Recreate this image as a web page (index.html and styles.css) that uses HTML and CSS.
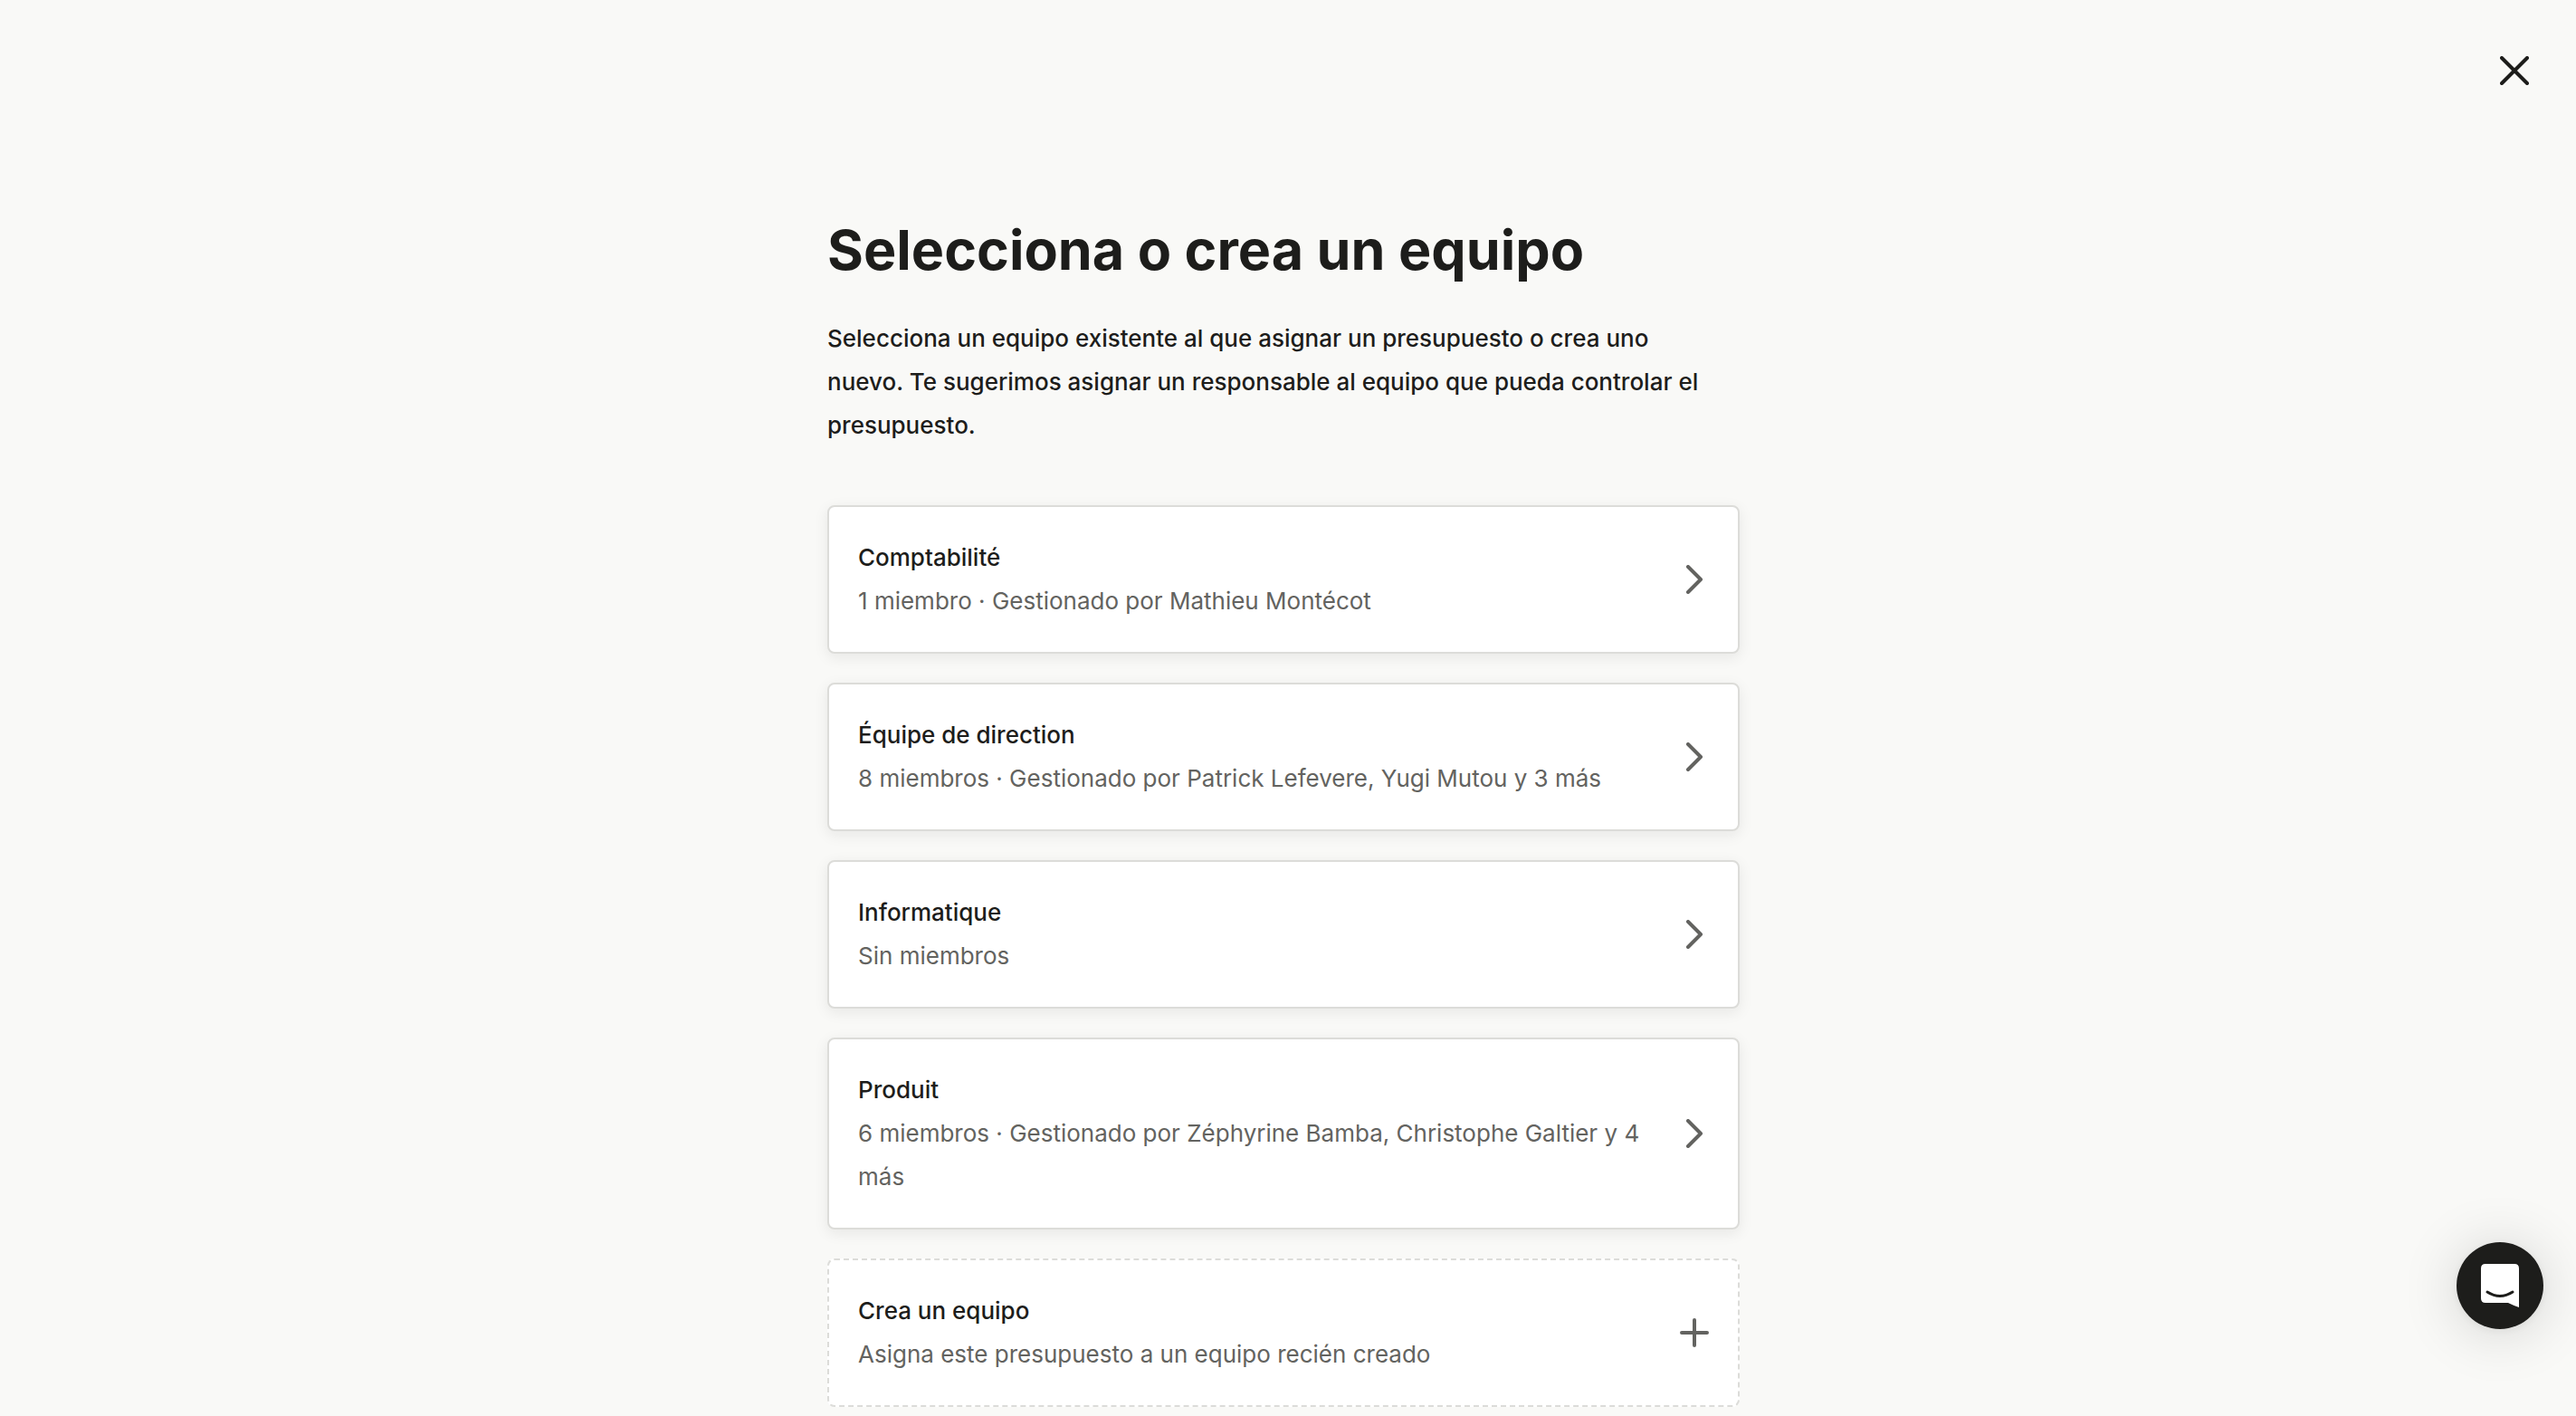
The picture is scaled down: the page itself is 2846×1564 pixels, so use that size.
FILE: index.html
```html
<!DOCTYPE html>
<html lang="es">

<head>
    <meta charset="UTF-8">
    <meta name="viewport" content="width=device-width, initial-scale=1.0">
    <title>Selecciona o crea un equipo</title>
    <link rel="stylesheet" href="styles.css">
</head>

<body>
    <header class="header">
        <button class="close" type="button" aria-label="Cerrar">
            <svg width="32" height="32" viewBox="0 0 32 32">
                <path d="M2 2L30 30M30 2L2 30" />
            </svg>
        </button>
    </header>

    <main class="content">
        <h1 class="title">Selecciona o crea un equipo</h1>
        <p class="intro">Selecciona un equipo existente al que asignar un presupuesto o crea uno nuevo. Te sugerimos asignar un responsable al equipo que pueda controlar el presupuesto.</p>

        <div class="teams">
            <button class="team" type="button">
                <span class="team-text">
                    <span class="team-name">Comptabilité</span>
                    <span class="team-info">1 miembro · Gestionado por Mathieu Montécot</span>
                </span>
                <svg class="team-icon" width="32" height="32" viewBox="0 0 32 32">
                    <path d="M9 2L23 16L9 30" />
                </svg>
            </button>
            <button class="team" type="button">
                <span class="team-text">
                    <span class="team-name">Équipe de direction</span>
                    <span class="team-info">8 miembros · Gestionado por Patrick Lefevere, Yugi Mutou y 3 más</span>
                </span>
                <svg class="team-icon" width="32" height="32" viewBox="0 0 32 32">
                    <path d="M9 2L23 16L9 30" />
                </svg>
            </button>
            <button class="team" type="button">
                <span class="team-text">
                    <span class="team-name">Informatique</span>
                    <span class="team-info">Sin miembros</span>
                </span>
                <svg class="team-icon" width="32" height="32" viewBox="0 0 32 32">
                    <path d="M9 2L23 16L9 30" />
                </svg>
            </button>
            <button class="team" type="button">
                <span class="team-text">
                    <span class="team-name">Produit</span>
                    <span class="team-info">6 miembros · Gestionado por Zéphyrine Bamba, Christophe Galtier y 4 más</span>
                </span>
                <svg class="team-icon" width="32" height="32" viewBox="0 0 32 32">
                    <path d="M9 2L23 16L9 30" />
                </svg>
            </button>
            <button class="team team-new" type="button">
                <span class="team-text">
                    <span class="team-name">Crea un equipo</span>
                    <span class="team-info">Asigna este presupuesto a un equipo recién creado</span>
                </span>
                <svg class="team-icon" width="32" height="32" viewBox="0 0 32 32">
                    <path d="M16 2V30M2 16H30" />
                </svg>
            </button>
        </div>
    </main>

    <button class="chat" type="button" aria-label="Abrir el chat">
        <svg width="42" height="48" viewBox="0 0 42 48">
            <path class="chat-bubble" d="M5 0H37Q42 0 42 5V48Q36 46 30 43H5Q0 43 0 38V5Q0 0 5 0Z" />
            <path class="chat-smile" d="M7 31Q21 40 35 31" />
        </svg>
    </button>
</body>

</html>
```
FILE: styles.css
```css
* {
    box-sizing: border-box;
}

body {
    margin: 0;
    padding-right: 10px;
    background-color: #f9f9f7;
    color: #1d1d1b;
    font-family: Inter, "Liberation Sans", sans-serif;
    font-size: 26px;
    line-height: 48px;
}

button {
    border: 0;
    font: inherit;
    color: inherit;
    cursor: pointer;
}

svg {
    display: block;
    flex: none;
    fill: none;
    stroke: currentColor;
    stroke-width: 4px;
    stroke-linecap: round;
    stroke-linejoin: round;
}

.header {
    display: flex;
    justify-content: flex-end;
    padding: 46px 26px 0;
}

.close {
    padding: 16px;
    background: none;
}

.content {
    max-width: 1008px;
    margin: 0 auto;
    padding: 126px 0 10px;
}

.title {
    margin: 0 0 34px;
    font-size: 61px;
    font-weight: 700;
    line-height: 80px;
}

.intro {
    margin: 0 0 64px;
    padding-right: 24px;
    font-weight: 500;
}

.teams {
    display: flex;
    flex-direction: column;
    gap: 32px;
}

.team {
    display: flex;
    align-items: center;
    gap: 32px;
    padding: 32px;
    border: 2px solid #dcdcd9;
    border-radius: 8px;
    background-color: #fff;
    box-shadow: 0 4px 16px rgba(29, 29, 27, 0.08);
    text-align: left;
}

.team-new {
    border-style: dashed;
    box-shadow: none;
}

.team-text {
    flex: 1;
}

.team-name,
.team-info {
    display: block;
}

.team-name {
    font-weight: 500;
}

.team-info,
.team-icon {
    color: #636360;
}

.chat {
    position: fixed;
    right: 36px;
    bottom: 96px;
    display: flex;
    align-items: center;
    justify-content: center;
    width: 96px;
    height: 96px;
    padding: 0;
    border-radius: 50%;
    background-color: #1d1d1b;
    box-shadow: 0 4px 64px rgba(0, 0, 0, 0.16), 0 2px 12px rgba(0, 0, 0, 0.06);
}

.chat-bubble {
    fill: #fff;
    stroke: none;
}

.chat-smile {
    stroke: #1d1d1b;
    stroke-width: 3px;
}
```
